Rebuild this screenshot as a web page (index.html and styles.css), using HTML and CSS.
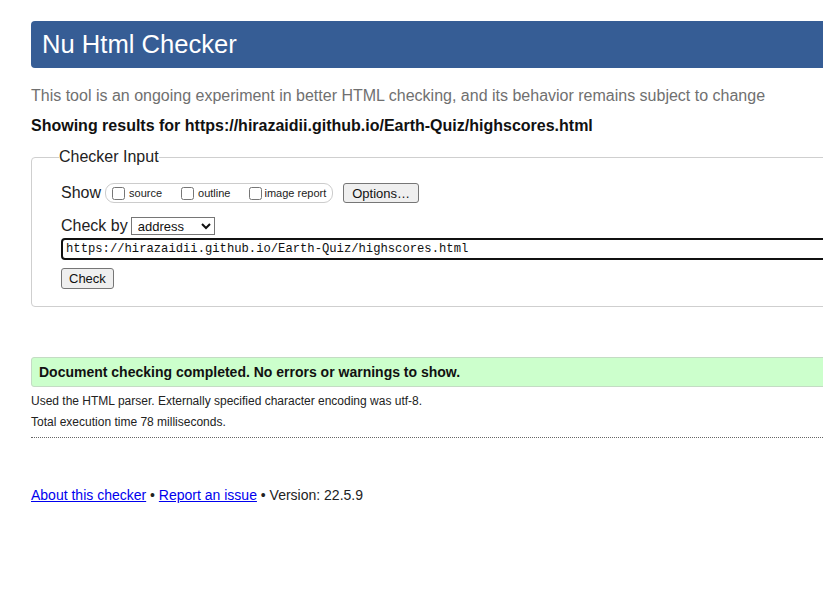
FILE: index.html
```html
<!DOCTYPE html>
<html lang="en">
<head>
<meta charset="utf-8">
<title>Nu Html Checker</title>
<link rel="stylesheet" href="styles.css">
</head>
<body>
<div class="page">
  <h1 class="title">Nu Html Checker</h1>
  <p class="intro">This tool is an ongoing experiment in better HTML checking, and its behavior remains subject to change</p>
  <p class="showing">Showing results for https://hirazaidii.github.io/Earth-Quiz/highscores.html</p>

  <fieldset class="checker">
    <legend class="legend">Checker Input</legend>
    <div class="row show-row">
      <span class="row-label">Show</span>
      <span class="group">
        <label class="opt"><input type="checkbox" class="cb">source</label>
        <label class="opt"><input type="checkbox" class="cb">outline</label>
        <label class="opt"><input type="checkbox" class="cb cb-last">image report</label>
      </span>
      <button class="btn btn-options" type="button">Options…</button>
    </div>
    <div class="row by-row">
      <span class="row-label">Check by</span>
      <select class="select">
        <option>address</option>
        <option>file upload</option>
        <option>text input</option>
      </select>
    </div>
    <div class="url-row">
      <input class="url" type="text" value="https://hirazaidii.github.io/Earth-Quiz/highscores.html">
    </div>
    <div class="submit-row">
      <button class="btn btn-check" type="button">Check</button>
    </div>
  </fieldset>

  <p class="success">Document checking completed. No errors or warnings to show.</p>
  <p class="details">Used the HTML parser. Externally specified character encoding was utf-8.</p>
  <p class="details">Total execution time 78 milliseconds.</p>
  <hr class="sep">

  <p class="footer"><a class="link" href="#">About this checker</a> • <a class="link" href="#">Report an issue</a> • Version: 22.5.9</p>
</div>
</body>
</html>
```

FILE: styles.css
```css
html, body {
  margin: 0;
  padding: 0;
  overflow: hidden;
  background: #fff;
}

body {
  font-family: "Liberation Sans", Arial, sans-serif;
  color: #222;
  padding: 21px 0 0 31px;
}

.page {
  width: 1100px;
}

.title {
  margin: 0;
  height: 47px;
  line-height: 47px;
  padding-left: 11px;
  background: #365d95;
  color: #fff;
  font-size: 25.6px;
  font-weight: normal;
  border-radius: 4px;
}

.intro {
  margin: 19px 0 0;
  font-size: 16px;
  color: #707070;
}

.showing {
  margin: 12px 0 0;
  font-size: 16px;
  font-weight: bold;
  color: #111;
}

.checker {
  margin: 13px 0 0;
  padding: 17px 0 17px 29px;
  border: 1px solid #cfcfcf;
  border-radius: 4px;
  min-width: 0;
}

.legend {
  padding: 0;
  margin-left: -2px;
  font-size: 16px;
  color: #222;
}

.row {
  display: flex;
}

.show-row {
  align-items: center;
  height: 20px;
}

.row-label {
  font-size: 16px;
  color: #222;
}

.group {
  display: inline-flex;
  align-items: center;
  gap: 19px;
  height: 18px;
  margin-left: 4px;
  padding: 0 6px;
  border: 1px solid #cccccc;
  border-radius: 9px;
}

.opt {
  display: inline-flex;
  align-items: center;
  font-size: 11px;
  color: #222;
}

.cb {
  width: 13px;
  height: 13px;
  margin: 0 4px 0 0;
}

.cb-last {
  margin-right: 2px;
}

.btn {
  font-family: "Liberation Sans", Arial, sans-serif;
  font-size: 13px;
  color: #111;
  background: #efefef;
  border: 1px solid #767676;
  border-radius: 3px;
  padding: 0 7px;
}

.btn-options {
  margin-left: 10px;
  height: 20px;
  padding: 0 8px;
}

.by-row {
  align-items: baseline;
  margin-top: 14px;
}

.select {
  margin-left: 3px;
  width: 84px;
  height: 18px;
  font-family: "Liberation Sans", Arial, sans-serif;
  font-size: 13px;
  color: #111;
  border: 1px solid #767676;
  border-radius: 0;
  background: #fff;
  padding: 0 0 0 2px;
}

.url-row {
  margin-top: 3px;
}

.url {
  box-sizing: border-box;
  width: 900px;
  height: 22px;
  margin: 0;
  padding: 0 3px;
  border: 2px solid #111;
  border-radius: 4px;
  font-family: "Liberation Mono", "DejaVu Sans Mono", monospace;
  font-size: 12.2px;
  color: #111;
  outline: none;
}

.submit-row {
  margin-top: 8px;
}

.btn-check {
  height: 21px;
}

.success {
  margin: 50px 0 0;
  height: 28px;
  line-height: 28px;
  padding: 0 7px;
  background: #ccffcc;
  border: 1px solid #c4dcc4;
  border-radius: 3px;
  font-size: 14px;
  font-weight: bold;
  color: #111;
}

.details {
  margin: 7px 0 0;
  font-size: 12px;
  color: #222;
}

.sep {
  margin: 8px 0 0;
  border: 0;
  border-top: 1px dotted #666;
  height: 0;
}

.footer {
  margin: 49px 0 0;
  font-size: 14px;
  color: #222;
}

.link {
  color: #0000ee;
}
```
